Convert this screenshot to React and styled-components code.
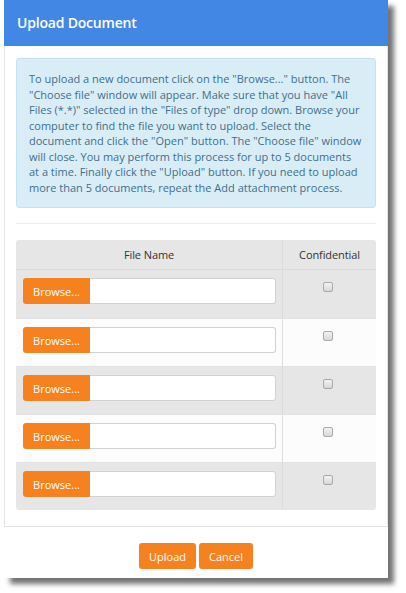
import styled, { createGlobalStyle } from "styled-components";

const GlobalStyle = createGlobalStyle`
  *, *::before, *::after {
    box-sizing: border-box;
  }

  html, body {
    margin: 0;
    background: #ffffff;
  }

  body {
    font-family: "Open Sans", "Liberation Sans", sans-serif;
  }
`;

const INFO_TEXT =
  'To upload a new document click on the "Browse..." button. The "Choose file" window will appear. Make sure that you have "All Files (*.*)" selected in the "Files of type" drop down. Browse your computer to find the file you want to upload. Select the document and click the "Open" button. The "Choose file" window will close. You may perform this process for up to 5 documents at a time. Finally click the "Upload" button. If you need to upload more than 5 documents, repeat the Add attachment process.';

const ROWS = [1, 2, 3, 4, 5];

const App = () => {
  return (
    <>
      <GlobalStyle />
      <St.Page>
        <St.Dialog>
          <St.Header>Upload Document</St.Header>

          <St.Panel>
            <St.InfoBox>{INFO_TEXT}</St.InfoBox>
            <St.Divider />

            <St.Table>
              <St.HeadRow>
                <St.HeadCell>File Name</St.HeadCell>
                <St.HeadCell>Confidential</St.HeadCell>
              </St.HeadRow>

              {ROWS.map((row) => (
                <St.Row key={row} $striped={row % 2 === 1}>
                  <St.FileCell>
                    <St.InputGroup>
                      <St.BrowseBtn type="button">Browse...</St.BrowseBtn>
                      <St.FileInput type="text" readOnly />
                    </St.InputGroup>
                  </St.FileCell>
                  <St.CheckCell>
                    <St.Check />
                  </St.CheckCell>
                </St.Row>
              ))}
            </St.Table>
          </St.Panel>

          <St.Footer>
            <St.ActionBtn type="button">Upload</St.ActionBtn>
            <St.ActionBtn type="button">Cancel</St.ActionBtn>
          </St.Footer>
        </St.Dialog>
      </St.Page>
    </>
  );
};

export default App;

const St = {
  Page: styled.div`
    padding: 0 0 20px 4px;
  `,

  Dialog: styled.div`
    display: flex;
    flex-direction: column;

    width: 384px;
    background-color: #ffffff;
    box-shadow: 6px 6px 5px rgba(0, 0, 0, 0.55);
  `,

  Header: styled.div`
    display: flex;
    align-items: center;

    height: 46px;
    padding: 0 13px 2px;

    background-color: #4387e5;
    color: #ffffff;
    font-size: 14px;
    font-weight: 600;
    letter-spacing: -0.2px;
  `,

  Panel: styled.div`
    display: flex;
    flex-direction: column;

    padding: 12px 11px 16px;
    border: 1px solid #e4e4e4;
    border-top: none;
  `,

  InfoBox: styled.div`
    padding: 12px 12px;

    background-color: #d9edf7;
    border: 1px solid #c4e3ef;
    border-radius: 3px;

    color: #3e6f8c;
    font-size: 11px;
    line-height: 15.5px;
  `,

  Divider: styled.hr`
    margin: 15px 0 16px;
    border: none;
    border-top: 1px solid #eeeeee;
  `,

  Table: styled.div`
    display: flex;
    flex-direction: column;

    border-radius: 3px;
    overflow: hidden;
  `,

  HeadRow: styled.div`
    display: grid;
    grid-template-columns: 266px 94px;

    height: 30px;
    background-color: #e6e6e6;
    border-bottom: 1px solid #dadada;
  `,

  HeadCell: styled.div`
    display: flex;
    align-items: center;
    justify-content: center;

    color: #333333;
    font-size: 11px;
    letter-spacing: -0.1px;

    & + & {
      border-left: 1px solid #dcdcdc;
    }
  `,

  Row: styled.div`
    display: grid;
    grid-template-columns: 266px 94px;

    height: 48px;
    background-color: ${({ $striped }) => ($striped ? "#e6e6e6" : "#fcfcfc")};
    border-top: 1px solid #e2e2e2;

    &:nth-child(2) {
      border-top: none;
    }
  `,

  FileCell: styled.div`
    padding: 8px 6px 0 7px;
  `,

  CheckCell: styled.div`
    display: flex;
    justify-content: center;

    padding-top: 12px;
    border-left: 1px solid #dcdcdc;
  `,

  InputGroup: styled.div`
    display: flex;
    height: 26px;
  `,

  BrowseBtn: styled.button`
    flex: none;

    width: 67px;
    height: 26px;
    padding: 0;

    border: none;
    border-radius: 3px 0 0 3px;
    background-color: #f5821f;
    color: #ffffff;

    font-family: "Open Sans", "Liberation Sans", sans-serif;
    font-size: 11px;
  `,

  FileInput: styled.input`
    flex: 1;
    min-width: 0;
    height: 26px;
    padding: 0 6px;

    background-color: #ffffff;
    border: 1px solid #d2d2d2;
    border-left: none;
    border-radius: 0 3px 3px 0;
    outline: none;
  `,

  Check: styled.span`
    display: block;
    width: 10px;
    height: 10px;
    margin-right: 3px;

    border: 1px solid #a9a9a9;
    border-radius: 2px;
    background: linear-gradient(#f4f4f4, #d6d6d6);
  `,

  Footer: styled.div`
    display: flex;
    justify-content: center;
    gap: 3px;

    padding: 16px 0 9px;
  `,

  ActionBtn: styled.button`
    height: 26px;
    padding: 0 10px;

    border: none;
    border-radius: 3px;
    background-color: #f5821f;
    color: #ffffff;

    font-family: "Open Sans", "Liberation Sans", sans-serif;
    font-size: 11px;
  `,
};
